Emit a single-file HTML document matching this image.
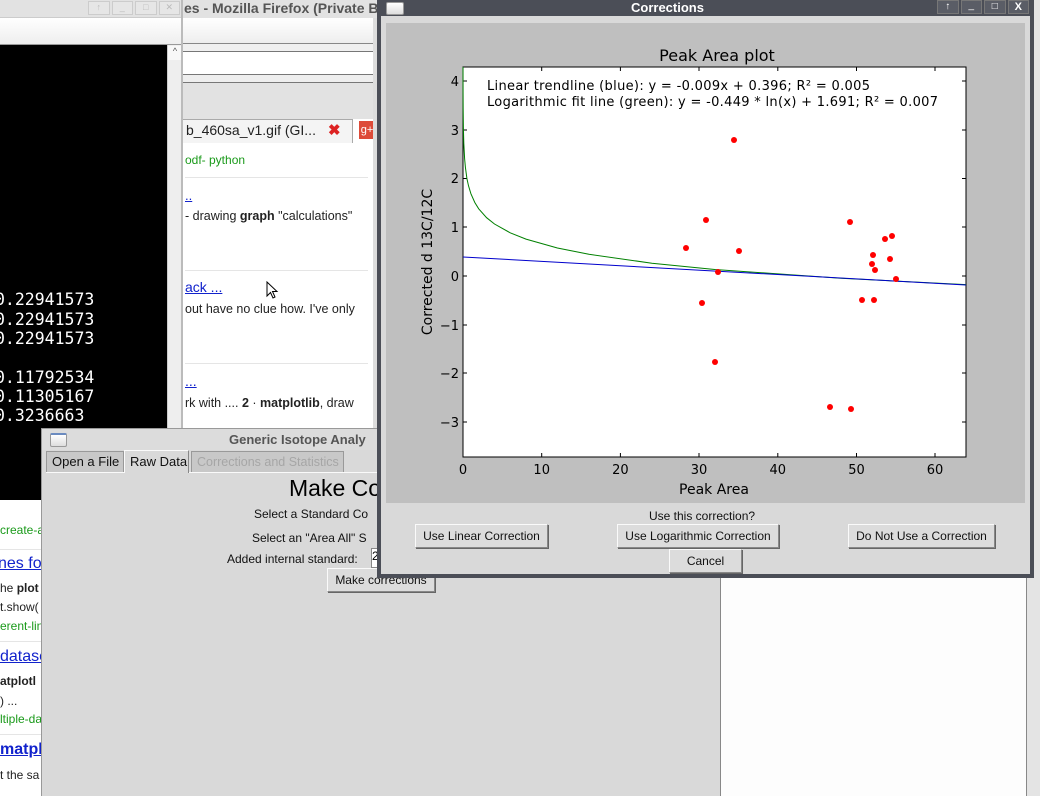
<!DOCTYPE html>
<html><head><meta charset="utf-8"><style>
*{margin:0;padding:0;box-sizing:border-box}
body{width:1040px;height:796px;overflow:hidden;position:relative;background:#fff;font-family:"Liberation Sans",sans-serif}
.a{position:absolute}
.t{position:absolute;white-space:nowrap}
.btn{position:absolute;background:#dcdcdc;border:1px solid #888;border-top-color:#fafafa;border-left-color:#fafafa;box-shadow:1px 1px 0 #666;font-size:12px;color:#111;text-align:center;font-family:"Liberation Sans",sans-serif;white-space:nowrap}
.term{position:absolute;left:-5px;color:#fff;font-family:"DejaVu Sans Mono","Liberation Mono",monospace;font-size:16.5px;white-space:nowrap}
</style></head><body>

<!-- terminal window -->
<div class="a" style="left:0;top:0;width:183px;height:18px;background:#e2e2e2;border-bottom:1px solid #ccc"></div>
<div class="a" style="left:88px;top:1px;width:92px;height:14px;display:flex;gap:2px">
 <div style="flex:1;border:1px solid #ccc;background:#e6e6e6;color:#bbb;font-size:9px;text-align:center">↑</div>
 <div style="flex:1;border:1px solid #ccc;background:#e6e6e6;color:#bbb;font-size:9px;text-align:center">_</div>
 <div style="flex:1;border:1px solid #ccc;background:#e6e6e6;color:#bbb;font-size:9px;text-align:center">□</div>
 <div style="flex:1;border:1px solid #ccc;background:#e6e6e6;color:#bbb;font-size:9px;text-align:center">✕</div>
</div>
<div class="a" style="left:0;top:18px;width:183px;height:27px;background:linear-gradient(#fff,#eee);border-bottom:1px solid #999"></div>
<div class="a" style="left:0;top:45px;width:167px;height:455px;background:#000;overflow:hidden">
<div class="term" style="top:245px">0.22941573</div>
<div class="term" style="top:265px">0.22941573</div>
<div class="term" style="top:284px">0.22941573</div>
<div class="term" style="top:323px">0.11792534</div>
<div class="term" style="top:342px">0.11305167</div>
<div class="term" style="top:361px">0.3236663</div>
</div>
<div class="a" style="left:167px;top:45px;width:16px;height:455px;background:#eee;border-left:1px solid #ccc"></div>
<div class="a" style="left:168px;top:46px;width:14px;height:14px;background:#f8f8f8;font-size:9px;text-align:center;color:#555">^</div>
<div class="a" style="left:181px;top:0;width:2px;height:500px;background:#bbb"></div>

<!-- firefox -->
<div class="a" style="left:183px;top:0;width:197px;height:18px;background:#e2e2e2"></div>
<div class="t" style="left:184px;top:0px;font-size:14px;font-weight:bold;color:#555">es - Mozilla Firefox (Private B</div>
<div class="a" style="left:183px;top:18px;width:195px;height:26px;background:linear-gradient(#fff,#eee);border-bottom:1px solid #888"></div>
<div class="a" style="left:183px;top:44px;width:195px;height:8px;background:#f0f0f0"></div>
<div class="a" style="left:183px;top:51px;width:195px;height:24px;background:#fff;border-top:1px solid #777;border-bottom:1px solid #777"></div>
<div class="a" style="left:183px;top:75px;width:195px;height:8px;background:#eee;border-bottom:1px solid #777"></div>
<div class="a" style="left:183px;top:83px;width:195px;height:36px;background:#e2e2e2"></div>
<div class="a" style="left:183px;top:119px;width:170px;height:24px;background:#f4f4f4;border-top:1px solid #aaa;border-right:1px solid #aaa"></div>
<div class="t" style="left:186px;top:122px;font-size:14px;color:#222">b_460sa_v1.gif (GI...</div>
<div class="t" style="left:328px;top:121px;font-size:15px;color:#d22;font-weight:bold">✖</div>
<div class="a" style="left:359px;top:121px;width:16px;height:18px;background:#dd4b39;color:#fff;font-size:11px;text-align:center;line-height:18px">g+</div>
<div class="a" style="left:183px;top:143px;width:190px;height:287px;background:#fff"></div>
<div class="a" style="left:373px;top:18px;width:5px;height:412px;background:#ddd"></div>
<div class="t" style="left:185px;top:153px;font-size:12px;color:#1a9a1a">odf- python</div>
<div class="a" style="left:185px;top:177px;width:183px;height:1px;background:#e5e5e5"></div>
<div class="t" style="left:185px;top:188px;font-size:13px;color:#12c;text-decoration:underline">..</div>
<div class="t" style="left:185px;top:209px;font-size:12.5px;color:#222">- drawing <b>graph</b> "calculations"</div>
<div class="a" style="left:185px;top:270px;width:183px;height:1px;background:#e5e5e5"></div>
<div class="t" style="left:185px;top:279px;font-size:14px;color:#12c;text-decoration:underline">ack ...</div>
<div class="t" style="left:185px;top:302px;font-size:12.5px;color:#222">out have no clue how. I've only</div>
<div class="a" style="left:185px;top:363px;width:183px;height:1px;background:#e5e5e5"></div>
<div class="t" style="left:185px;top:373px;font-size:14px;color:#12c;text-decoration:underline">...</div>
<div class="t" style="left:185px;top:396px;font-size:12.5px;color:#222">rk with .... <b>2</b> · <b>matplotlib</b>, draw</div>
<svg class="a" style="left:266px;top:281px" width="14" height="20"><path d="M1 1 L1 15 L4.5 11.5 L7 17 L9 16 L6.5 10.5 L11 10.5 Z" fill="#fff" stroke="#000"/></svg>

<!-- left strip web -->
<div class="a" style="left:0;top:500px;width:42px;height:296px;background:#fff;overflow:hidden">
 <div class="t" style="left:0;top:23px;font-size:12px;color:#1a9a1a">create-a</div>
 <div class="a" style="left:0;top:49px;width:42px;height:1px;background:#e5e5e5"></div>
 <div class="t" style="left:-2px;top:55px;font-size:16px;color:#12c;text-decoration:underline">nes fo</div>
 <div class="t" style="left:0;top:81px;font-size:12px;color:#222">he <b>plot</b></div>
 <div class="t" style="left:0;top:100px;font-size:12px;color:#222">t.show(</div>
 <div class="t" style="left:0;top:119px;font-size:12px;color:#1a9a1a">erent-lin</div>
 <div class="a" style="left:0;top:141px;width:42px;height:1px;background:#e5e5e5"></div>
 <div class="t" style="left:0;top:148px;font-size:16px;color:#12c;text-decoration:underline">datase</div>
 <div class="t" style="left:0;top:174px;font-size:12px;color:#222"><b>atplotl</b></div>
 <div class="t" style="left:0;top:194px;font-size:12px;color:#222">) ...</div>
 <div class="t" style="left:0;top:212px;font-size:12px;color:#1a9a1a">ltiple-da</div>
 <div class="a" style="left:0;top:234px;width:42px;height:1px;background:#e5e5e5"></div>
 <div class="t" style="left:0;top:241px;font-size:16px;color:#12c;text-decoration:underline;font-weight:bold">matpl</div>
 <div class="t" style="left:0;top:268px;font-size:12px;color:#222">t the sa</div>
</div>

<!-- right white panel -->
<div class="a" style="left:716px;top:430px;width:311px;height:366px;background:#fdfdfd;border-left:5px solid #d9d9d9;border-right:1px solid #888"></div>
<div class="a" style="left:720px;top:430px;width:1px;height:366px;background:#888"></div>
<div class="a" style="left:1027px;top:577px;width:13px;height:219px;background:#e4e4e4"></div>
<div class="a" style="left:1033px;top:0;width:7px;height:577px;background:#e4e4e4"></div>

<!-- Generic isotope window -->
<div class="a" style="left:41px;top:428px;width:675px;height:368px;background:#d9d9d9;border-left:1px solid #999;border-top:1px solid #999"></div>
<div class="a" style="left:42px;top:429px;width:674px;height:21px;background:#dcdcdc"></div>
<div class="a" style="left:50px;top:433px;width:17px;height:14px;border:1px solid #999;border-radius:2px;background:linear-gradient(#fff,#ddd);border-top:2px solid #6b8bc0"></div>
<div class="t" style="left:229px;top:432px;font-size:13px;font-weight:bold;color:#555">Generic Isotope Analy</div>
<div class="a" style="left:46px;top:472px;width:670px;height:1px;background:#fafafa"></div>
<div class="a" style="left:46px;top:451px;width:78px;height:21px;background:#c8c8c8;border:1px solid #999;border-bottom:none;font-size:13px;line-height:20px;padding-left:5px;color:#111;white-space:nowrap">Open a File</div>
<div class="a" style="left:124px;top:450px;width:65px;height:23px;background:#d9d9d9;border:1px solid #fafafa;border-right-color:#888;border-bottom:none;font-size:13px;line-height:22px;padding-left:5px;color:#111;white-space:nowrap">Raw Data</div>
<div class="a" style="left:191px;top:451px;width:153px;height:21px;background:#c8c8c8;border:1px solid #999;border-bottom:none;font-size:12.5px;line-height:20px;padding-left:5px;color:#a6a6a6;white-space:nowrap;overflow:hidden">Corrections and Statistics</div>
<div class="t" style="left:289px;top:475px;font-size:23px;color:#000">Make Co</div>
<div class="t" style="left:254px;top:507px;font-size:12px;color:#111">Select a Standard Co</div>
<div class="t" style="left:252px;top:531px;font-size:12px;color:#111">Select an "Area All" S</div>
<div class="t" style="left:227px;top:552px;font-size:12px;color:#111">Added internal standard:</div>
<div class="a" style="left:371px;top:548px;width:10px;height:20px;background:#fff;border:1px solid #888;font-size:12px">2</div>
<div class="btn" style="left:327px;top:568px;width:108px;height:24px;line-height:22px">Make corrections</div>

<!-- Corrections window -->
<div class="a" style="left:377px;top:0;width:657px;height:578px;background:#4b4e57"></div>
<div class="a" style="left:381px;top:16px;width:649px;height:558px;background:#d9d9d9"></div>
<div class="a" style="left:386px;top:2px;width:18px;height:13px;border:1px solid #999;border-radius:2px;background:linear-gradient(#fff,#ddd)"></div>
<div class="t" style="left:631px;top:0;font-size:13px;font-weight:bold;color:#fff">Corrections</div>
<div class="a" style="left:937px;top:0;width:92px;height:14px;display:flex;gap:2px">
 <div style="flex:1;border:1px solid #777;background:#5a5d66;color:#fff;font-size:10px;text-align:center;line-height:12px">↑</div>
 <div style="flex:1;border:1px solid #777;background:#5a5d66;color:#fff;font-size:10px;text-align:center;line-height:10px">_</div>
 <div style="flex:1;border:1px solid #777;background:#5a5d66;color:#fff;font-size:10px;text-align:center;line-height:12px">□</div>
 <div style="flex:1;border:1px solid #777;background:#5a5d66;color:#fff;font-size:11px;text-align:center;line-height:12px;font-weight:bold">X</div>
</div>
<div class="a" style="left:386px;top:23px;width:639px;height:480px;background:#bfbfbf"></div>

<svg class="a" style="left:386px;top:23px" width="639" height="480" font-family="DejaVu Sans, Liberation Sans, sans-serif">
<g transform="translate(-386,-23)">
<rect x="463" y="67" width="503" height="390" fill="#fff" stroke="#000" stroke-width="1"/>
<text x="717" y="61" font-size="16" text-anchor="middle" fill="#000">Peak Area plot</text>
<g stroke="#000" stroke-width="1">
<path d="M541.7 67v4M620.4 67v4M699 67v4M777.8 67v4M856.5 67v4M935 67v4M541.7 457v-4M620.4 457v-4M699 457v-4M777.8 457v-4M856.5 457v-4M935 457v-4"/>
<path d="M463 81h4M463 130h4M463 178.5h4M463 227h4M463 276h4M463 325h4M463 373h4M463 422h4M966 81h-4M966 130h-4M966 178.5h-4M966 227h-4M966 276h-4M966 325h-4M966 373h-4M966 422h-4"/>
</g>
<g font-size="13" fill="#000" text-anchor="end">
<text x="459" y="86">4</text><text x="459" y="135">3</text><text x="459" y="183">2</text><text x="459" y="232">1</text><text x="459" y="281">0</text><text x="459" y="330">−1</text><text x="459" y="378">−2</text><text x="459" y="427">−3</text>
</g>
<g font-size="13" fill="#000" text-anchor="middle">
<text x="463" y="474">0</text><text x="541.7" y="474">10</text><text x="620.4" y="474">20</text><text x="699" y="474">30</text><text x="777.8" y="474">40</text><text x="856.5" y="474">50</text><text x="935" y="474">60</text>
</g>
<text x="714" y="494" font-size="14" text-anchor="middle">Peak Area</text>
<text transform="translate(432,262) rotate(-90)" font-size="14" text-anchor="middle">Corrected d 13C/12C</text>
<text x="487" y="90" font-size="13" textLength="383" lengthAdjust="spacing">Linear trendline (blue):  y = -0.009x + 0.396;  R² = 0.005</text>
<text x="487" y="106" font-size="13" textLength="451" lengthAdjust="spacing">Logarithmic fit line (green):  y = -0.449 * ln(x) + 1.691;  R² = 0.007</text>
<polyline fill="none" stroke="#008000" stroke-width="1" points="463.02,67 463.04,77.7 463.08,92.9 463.16,108.1 463.4,128 463.8,143.3 464.6,158.5 465.4,167.3 466.9,178.5 468.5,185.8 470.9,193.65 474.8,202.5 478.7,208.8 486.6,217.7 494.5,224 510.2,232.8 526,239.1 557.4,248 588.9,254.3 651.9,263.2 714.8,269.5 840.8,278.3 966,284.6"/>
<line x1="463" y1="257" x2="966" y2="285" stroke="#0000cc" stroke-width="1"/>
<g fill="#ff0000">
<circle cx="686" cy="248" r="3"/><circle cx="706" cy="220" r="3"/><circle cx="702" cy="303" r="3"/><circle cx="718" cy="272" r="3"/><circle cx="734" cy="140" r="3"/><circle cx="739" cy="251" r="3"/><circle cx="715" cy="362" r="3"/><circle cx="850" cy="222" r="3"/><circle cx="885" cy="239" r="3"/><circle cx="892" cy="236" r="3"/><circle cx="873" cy="255" r="3"/><circle cx="872" cy="264" r="3"/><circle cx="875" cy="270" r="3"/><circle cx="890" cy="259" r="3"/><circle cx="896" cy="279" r="3"/><circle cx="862" cy="300" r="3"/><circle cx="874" cy="300" r="3"/><circle cx="830" cy="407" r="3"/><circle cx="851" cy="409" r="3"/>
</g>
</g>
</svg>

<div class="t" style="left:649px;top:509px;font-size:12px;color:#111">Use this correction?</div>
<div class="btn" style="left:415px;top:524px;width:133px;height:24px;line-height:22px">Use Linear Correction</div>
<div class="btn" style="left:617px;top:524px;width:162px;height:24px;line-height:22px">Use Logarithmic Correction</div>
<div class="btn" style="left:848px;top:524px;width:147px;height:24px;line-height:22px">Do Not Use a Correction</div>
<div class="btn" style="left:669px;top:549px;width:73px;height:24px;line-height:22px">Cancel</div>
</body></html>
